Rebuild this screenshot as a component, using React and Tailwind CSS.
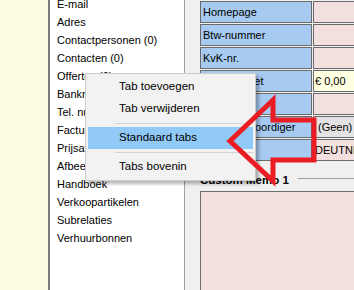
import React from 'react';

const tabs = [
    'E-mail',
    'Adres',
    'Contactpersonen (0)',
    'Contacten (0)',
    'Offertes (0)',
    'Bankrekeningen',
    'Tel. nummers',
    'Facturen (0)',
    'Prijsafspraken',
    'Afbeeldingen',
    'Handboek',
    'Verkoopartikelen',
    'Subrelaties',
    'Verhuurbonnen',
];

const fields = [
    { label: 'Homepage', value: '', bg: 'bg-[#f2dfde]', pad: 'pl-[1px]' },
    { label: 'Btw-nummer', value: '', bg: 'bg-[#f2dfde]', pad: 'pl-[1px]' },
    { label: 'KvK-nr.', value: '', bg: 'bg-[#f2dfde]', pad: 'pl-[1px]' },
    { label: 'Kredietlimiet', value: '€ 0,00', bg: 'bg-[#ffffe1]', pad: 'pl-[1px]' },
    { label: 'Debiteurnr.', value: '', bg: 'bg-[#f2dfde]', pad: 'pl-[1px]' },
    { label: 'Vertegenwoordiger', value: '(Geen)', bg: 'bg-[#e3e3e3]', pad: 'pl-[4px]' },
    { label: 'BIC', value: 'DEUTNL2A', bg: 'bg-[#f2dfde]', pad: 'pl-[1px]' },
];

const MenuItem = ({ children, active }) => (
    <div
        className={`h-[22px] flex items-center pl-[31px] ${active ? 'bg-[#91c9f7]' : ''}`}
    >
        {children}
    </div>
);

const Separator = () => (
    <div className="h-[7px] flex items-center pl-[27px]">
        <div className="h-px w-full bg-[#d3d3d3]" />
    </div>
);

const App = () => {
    return (
        <div className="relative w-[354px] h-[290px] overflow-hidden flex bg-[#f0f0f0] text-black font-['Liberation_Sans',Arial,sans-serif] text-[11px]">
            {/* cream strip */}
            <div className="w-[48px] shrink-0 bg-[#fdfde3]" />

            {/* tab list */}
            <div className="w-[137px] shrink-0 bg-white border-l-2 border-l-[#7a7a7a] border-r border-r-[#a0a0a0] pl-[7px]">
                <div className="-mt-[5px] flex flex-col">
                    {tabs.map((t) => (
                        <div key={t} className="h-[18px] leading-[18px] whitespace-nowrap">
                            {t}
                        </div>
                    ))}
                </div>
            </div>

            {/* detail fields */}
            <div className="flex-1 pl-[15px] pt-[1px] flex flex-col">
                <div className="flex flex-col gap-[1px]">
                    {fields.map((f) => (
                        <div key={f.label} className="flex gap-[1px] h-[22px]">
                            <div className="w-[112px] shrink-0 border border-[#6b6b6b] bg-[#a6caf0] pl-[2px] flex items-center whitespace-nowrap">
                                {f.label}
                            </div>
                            <div className={`w-[80px] shrink-0 border border-[#6b6b6b] ${f.bg} ${f.pad} flex items-center whitespace-nowrap`}>
                                {f.value}
                            </div>
                        </div>
                    ))}
                </div>

                <div className="mt-[12px] h-[14px] flex">
                    <span className="font-bold text-[11.5px] leading-[14px] whitespace-nowrap">Custom Memo 1</span>
                    <div className="ml-[9px] mt-[5px] h-px w-[80px] shrink-0 bg-[#a0a0a0]" />
                </div>

                <div className="mt-[4px] h-[110px] w-[200px] shrink-0 border border-[#6e6e6e] bg-[#f2e0df]" />
            </div>

            {/* context menu */}
            <div className="absolute left-[85px] top-[73px] w-[171px] border border-[#cccccc] bg-[#f2f2f2] p-[2px] text-[11.5px] shadow-[3px_3px_3px_rgba(0,0,0,0.28)]">
                <MenuItem>Tab toevoegen</MenuItem>
                <MenuItem>Tab verwijderen</MenuItem>
                <Separator />
                <MenuItem active>Standaard tabs</MenuItem>
                <Separator />
                <MenuItem>Tabs bovenin</MenuItem>
            </div>

            {/* red annotation arrow */}
            <svg className="absolute left-0 top-0 pointer-events-none" width="354" height="290" viewBox="0 0 354 290">
                <polygon
                    points="230,141 273,100 273,120 314,120 314,160 273,160 273,181"
                    fill="none"
                    stroke="#ea1c24"
                    strokeWidth="5"
                    strokeLinejoin="miter"
                />
            </svg>
        </div>
    );
};

export default App;
